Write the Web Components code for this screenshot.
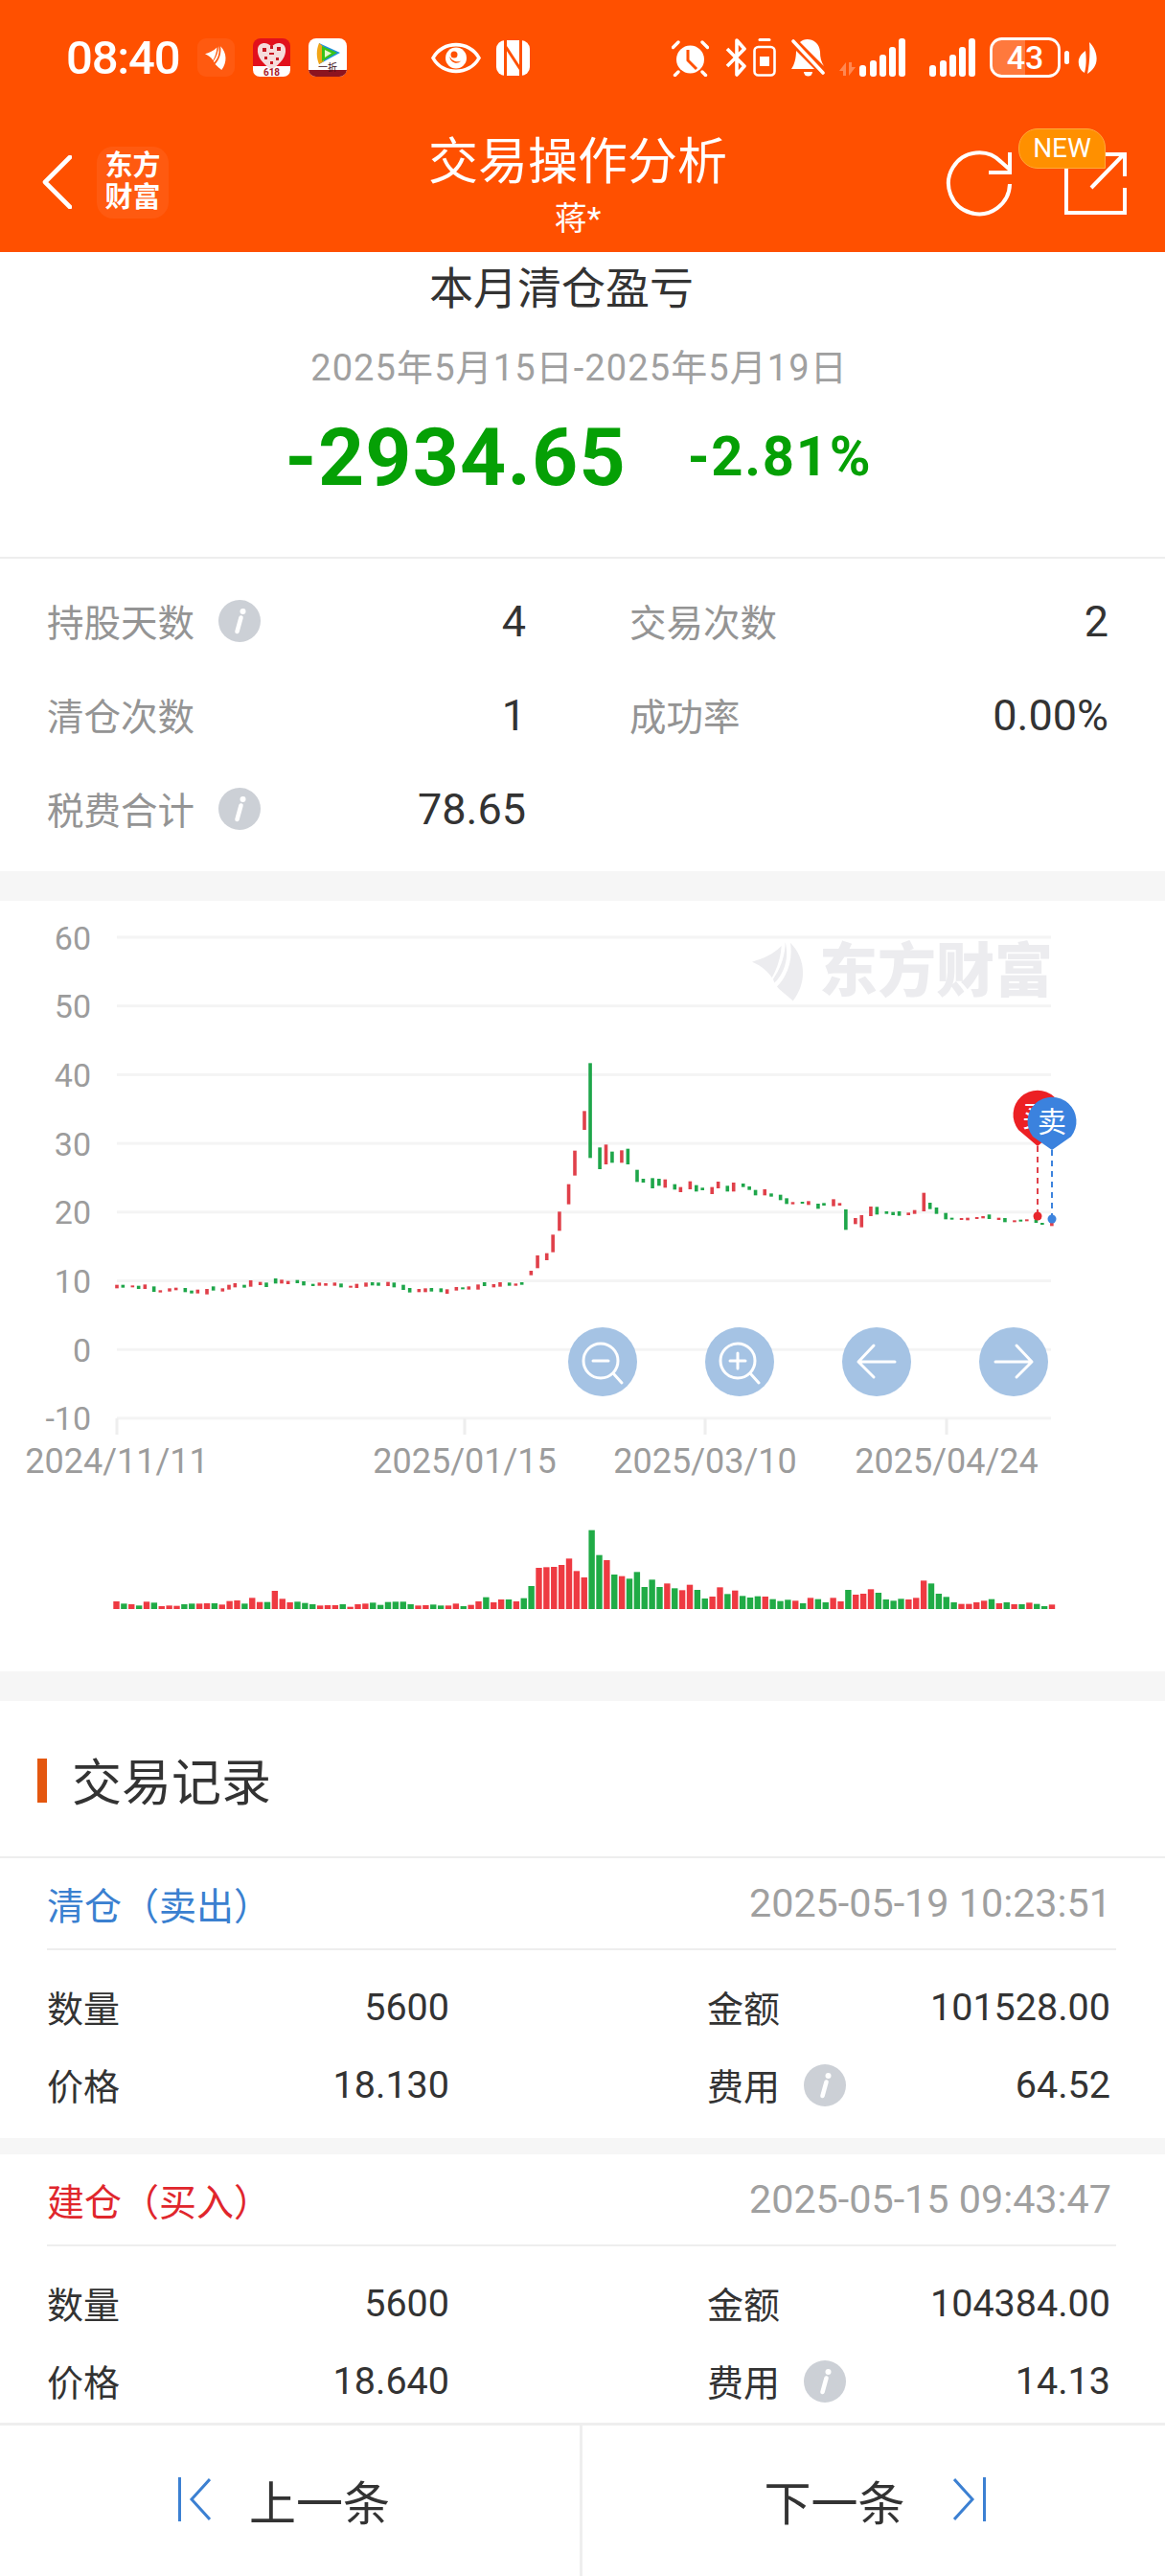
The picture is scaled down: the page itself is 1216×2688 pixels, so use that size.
<!DOCTYPE html>
<html lang="zh">
<head>
<meta charset="utf-8">
<title>交易操作分析</title>
<style>
    html, body{
        margin: 0;
        padding: 0;
        background: #fff;
        font-family: Roboto, "Noto Sans CJK SC", sans-serif;
        color: #333;
    }
</style>
</head>
<body>
<trade-app></trade-app>

<script>
const FEATHER = `
    <path d="M0 62C32 52 66 40 92 12C90 52 76 88 62 112C48 88 24 72 0 62Z"/>
    <path d="M104 0C116 44 104 96 70 128L66 116C88 84 104 44 104 0Z"/>
    <path d="M120 2C170 52 172 128 128 185C116 172 96 160 78 140C112 104 128 56 120 2Z"/>`;

const INFO_ICON = `
    <svg width="44" height="44" viewBox="0 0 44 44" style="flex:none">
        <circle cx="22" cy="22" r="22" fill="#ccd0d6"/>
        <circle cx="25.5" cy="12" r="3" fill="#fff"/>
        <path d="M23.5 18.5L19.5 33" stroke="#fff" stroke-width="4.6" stroke-linecap="round"/>
    </svg>`;

// ---------- status bar ----------
const statusTemplate = document.createElement('template');
statusTemplate.innerHTML = `
    <style>
        :host{
            display: flex;
            align-items: center;
            height: 120px;
            padding-left: 69px;
            box-sizing: border-box;
            color: #fff;
        }
        .time{
            width: 125px;
            font-size: 49px;
            font-weight: 500;
            letter-spacing: -1.2px;
        }
        svg{
            flex: none;
            display: block;
        }
    </style>
    <span class="time">08:40</span>
    <svg width="39" height="40" viewBox="0 0 39 40" style="margin-left:12px">
        <rect width="39" height="40" rx="9" fill="#ff5a10"/>
        <g fill="#fff" transform="translate(8 8) scale(.135)">${FEATHER}</g>
    </svg>
    <svg width="39" height="40" viewBox="0 0 39 40" style="margin-left:19px">
        <rect width="39" height="40" rx="8" fill="#e2101c"/>
        <path d="M0 29H39V33a7 7 0 0 1-7 7H7a7 7 0 0 1-7-7Z" fill="#fff"/>
        <path d="M19.5 33C10 26 4 19 5 11C6 4 15 3 19.5 9C24 3 33 4 34 11C35 19 29 26 19.5 33Z" fill="#f6dcdc"/>
        <path d="M10 10h4v4h-4zM17 15h5v2h-5zM25 9h4v4h-4zM12 19h3v3h-3zM24 20h3v3h-3zM18 24h3v3h-3zM18 8h3v3h-3z" fill="#c81822"/>
        <text x="19.5" y="39" text-anchor="middle" font-size="10" font-weight="700" fill="#a8182a">618</text>
    </svg>
    <svg width="40" height="40" viewBox="0 0 40 40" style="margin-left:19px">
        <rect width="40" height="40" rx="8" fill="#fff"/>
        <path d="M0 33H40a8 8 0 0 1-8 7H8a8 8 0 0 1-8-7Z" fill="#8c1420"/>
        <path d="M11 5L33 15L11 27Z" fill="#1d8fe0"/>
        <path d="M11 5C8 12 8 20 11 27L16 24V9Z" fill="#f2a516"/>
        <path d="M14 8L30 15L14 24Z" fill="#38c21a"/>
        <path d="M17 12L24 15.5L17 20Z" fill="#e8f8c8"/>
        <text x="20" y="34" text-anchor="middle" font-size="10" fill="#401018">一折</text>
    </svg>
    <svg width="52" height="35" viewBox="0 0 52 35" style="margin-left:88px">
        <path d="M2 17.5C12 -1 40 -1 50 17.5C40 36 12 36 2 17.5Z" fill="none" stroke="#fff" stroke-width="3.6"/>
        <circle cx="26" cy="17.5" r="11" fill="#fff"/>
        <path d="M20 14A7 7 0 0 0 30 22A9 9 0 0 1 20 14Z" fill="#ff5000" transform="rotate(-18 26 17)"/>
        <circle cx="24" cy="14" r="3.5" fill="#ff5000"/>
    </svg>
    <svg width="35" height="37" viewBox="0 0 35 37" style="margin-left:16px">
        <rect width="35" height="37" rx="9" fill="#fff"/>
        <path d="M9.5 -1V38M25.5 -1V38M10 7L25 30" fill="none" stroke="#ff5000" stroke-width="3"/>
    </svg>
    <svg width="39" height="39" viewBox="0 0 39 39" style="margin-left:148px">
        <circle cx="19.5" cy="21" r="14.5" fill="#fff"/>
        <path d="M17 11V22L26 31" fill="none" stroke="#ff5000" stroke-width="3"/>
        <path d="M1.5 8.5L7 3M37.5 8.5L32 3M7 34L3.5 37.5M32 34L35.5 37.5" stroke="#fff" stroke-width="3.4" stroke-linecap="round"/>
    </svg>
    <svg width="23" height="40" viewBox="0 0 23 40" style="margin-left:17px">
        <path d="M2 11L20 29L12 38V2L20 11L2 29" fill="none" stroke="#fff" stroke-width="3.6" stroke-linejoin="round"/>
    </svg>
    <svg width="24" height="40" viewBox="0 0 24 40" style="margin-left:6px">
        <path d="M7 1.5H17" stroke="#fff" stroke-width="3" stroke-linecap="round"/>
        <rect x="1.5" y="9" width="21" height="29.5" rx="4" fill="none" stroke="#fff" stroke-width="2.6"/>
        <rect x="7" y="19" width="10" height="10" fill="#fff"/>
    </svg>
    <svg width="35" height="40" viewBox="0 0 35 40" style="margin-left:16px">
        <path d="M9 4C15 -2 29 1 30 14C30 20 31 24 34 29ZM5 13L24 32H0C3 28 5 21 5 13Z" fill="#fff"/>
        <path d="M2 3L33 36" stroke="#fff" stroke-width="3.6" stroke-linecap="round"/>
        <path d="M13 35H22A4.5 4.5 0 0 1 13 35Z" fill="#fff"/>
    </svg>
    <svg width="17" height="14" viewBox="0 0 17 14" style="margin:24px 0 0 15px">
        <path d="M7 14V0L0 9H4V14ZM10 0V14L17 5H13V0Z" fill="#fff" opacity=".32"/>
    </svg>
    <svg width="48" height="40" viewBox="0 0 48 40" style="margin-left:4px">
        <rect x="0" y="28" width="7" height="12" rx="3" fill="#fff"/>
        <rect x="11" y="23" width="7" height="17" rx="3" fill="#fff"/>
        <rect x="21" y="17" width="7" height="23" rx="3" fill="#fff"/>
        <rect x="31" y="9" width="7" height="31" rx="3" fill="#fff"/>
        <rect x="41" y="0" width="7" height="40" rx="3" fill="#fff"/>
    </svg>
    <svg width="48" height="40" viewBox="0 0 48 40" style="margin-left:25px">
        <rect x="0" y="28" width="7" height="12" rx="3" fill="#fff"/>
        <rect x="11" y="23" width="7" height="17" rx="3" fill="#fff"/>
        <rect x="21" y="17" width="7" height="23" rx="3" fill="#fff"/>
        <rect x="31" y="9" width="7" height="31" rx="3" fill="#fff"/>
        <rect x="41" y="0" width="7" height="40" rx="3" fill="#fff"/>
    </svg>
    <svg width="84" height="42" viewBox="0 0 84 42" style="margin-left:15px">
        <path d="M10 3H37V39H10A8 8 0 0 1 3 31V10A8 8 0 0 1 10 3Z" fill="#fff" opacity=".24"/>
        <rect x="1.5" y="1.5" width="71" height="39" rx="11" fill="none" stroke="#fff" stroke-width="2.8"/>
        <rect x="78" y="14" width="5" height="14" rx="2.5" fill="#fff"/>
        <text x="37" y="33" text-anchor="middle" font-size="34" font-weight="500" fill="#fff">43</text>
    </svg>
    <svg width="20" height="33" viewBox="0 0 20 33" style="margin-left:8px">
        <path d="M12 0C18 6 21 14 19 22C17 28 13 31 10 33C12 24 13 12 12 0ZM8 9C9 16 9 25 7 32C2 29 0 24 1 18C2 14 5 11 8 9Z" fill="#fff"/>
    </svg>
`;

class StatusBar extends HTMLElement {
    constructor () {
        super();
        this.attachShadow({ mode: 'open' }).appendChild(statusTemplate.content.cloneNode(true));
    }
}
customElements.define('status-bar', StatusBar);

// ---------- nav bar ----------
const navTemplate = document.createElement('template');
navTemplate.innerHTML = `
    <style>
        :host{
            display: grid;
            grid-template-columns: 1fr auto 1fr;
            height: 143px;
            color: #fff;
        }
        .left{
            display: flex;
            align-items: center;
            padding: 0 0 3px 44px;
        }
        .logo{
            margin-left: 26px;
            width: 75px;
            height: 75px;
            background: #ff5a10;
            border-radius: 17px;
            display: flex;
            align-items: center;
            justify-content: center;
            text-align: center;
            font-size: 29px;
            font-weight: 700;
            line-height: 33px;
        }
        .center{
            text-align: center;
            margin-right: 10px;
            padding-top: 19px;
        }
        .title{
            font-size: 52px;
            line-height: 62px;
        }
        .sub{
            margin-top: 7px;
            font-size: 34px;
            line-height: 40px;
        }
        .right{
            display: flex;
            justify-content: flex-end;
            align-items: center;
            padding: 0 40px 1px 0;
            gap: 53px;
        }
        .share{
            position: relative;
            height: 66px;
        }
        .new{
            position: absolute;
            left: -47px;
            top: -24px;
            width: 91px;
            height: 42px;
            box-sizing: border-box;
            background: #ff9000;
            border: 1px solid #ffa93a;
            border-radius: 20px 20px 0 20px;
            font-size: 28px;
            line-height: 40px;
            text-align: center;
        }
        svg{
            display: block;
        }
    </style>
    <div class="left">
        <svg width="31" height="56" viewBox="0 0 31 56">
            <path d="M29 2L3 28L29 54" fill="none" stroke="#fff" stroke-width="4.6" stroke-linecap="round" stroke-linejoin="round"/>
        </svg>
        <div class="logo">东方<br>财富</div>
    </div>
    <div class="center">
        <div class="title">交易操作分析</div>
        <div class="sub">蒋*</div>
    </div>
    <div class="right">
        <svg width="70" height="70" viewBox="0 0 70 70">
            <path d="M67 36A32 32 0 1 1 58 13L67 21" fill="none" stroke="#fff" stroke-width="4"/>
            <path d="M67 3V24H45" fill="none" stroke="#fff" stroke-width="4"/>
        </svg>
        <div class="share">
            <svg width="66" height="66" viewBox="0 0 66 66">
                <path d="M3 18V64H64V38" fill="none" stroke="#fff" stroke-width="4"/>
                <path d="M29 38L63 3M39 3H64V26" fill="none" stroke="#fff" stroke-width="4"/>
            </svg>
            <div class="new">NEW</div>
        </div>
    </div>
`;

class NavBar extends HTMLElement {
    constructor () {
        super();
        this.attachShadow({ mode: 'open' }).appendChild(navTemplate.content.cloneNode(true));
    }
}
customElements.define('nav-bar', NavBar);

// ---------- summary ----------
const summaryTemplate = document.createElement('template');
summaryTemplate.innerHTML = `
    <style>
        :host{
            display: block;
            height: 320px;
            box-sizing: border-box;
            padding-top: 8px;
            text-align: center;
            border-bottom: 2px solid #eeeeee;
        }
        .title{
            font-size: 46px;
            line-height: 60px;
            color: #333;
            margin-right: 44px;
        }
        .date{
            margin-top: 28px;
            font-size: 38px;
            line-height: 50px;
            color: #a0a0a0;
            letter-spacing: 1.1px;
            margin-right: 7px;
        }
        .profit{
            margin-top: 23px;
            height: 90px;
            display: flex;
            align-items: center;
            justify-content: center;
            gap: 64px;
            color: #05a005;
            font-weight: 700;
            padding-right: 8px;
        }
        .big{
            font-size: 84px;
            letter-spacing: 1.2px;
        }
        .pct{
            font-size: 58px;
            letter-spacing: 1.7px;
            margin-top: -2px;
        }
    </style>
    <div class="title">本月清仓盈亏</div>
    <div class="date">2025年5月15日-2025年5月19日</div>
    <div class="profit">
        <span class="big">-2934.65</span>
        <span class="pct">-2.81%</span>
    </div>
`;

class SummaryCard extends HTMLElement {
    constructor () {
        super();
        this.attachShadow({ mode: 'open' }).appendChild(summaryTemplate.content.cloneNode(true));
    }
}
customElements.define('summary-card', SummaryCard);

// ---------- key/value cell, used by the stats and by the records ----------
const kvTemplate = document.createElement('template');
kvTemplate.innerHTML = `
    <style>
        :host{
            display: flex;
            align-items: center;
        }
        .label{
            font-size: var(--kv-label-size, 38px);
            color: var(--kv-label-color, #333);
            margin: -3px 25px 0 0;
        }
        .value{
            margin-left: auto;
            font-size: var(--kv-value-size, 40px);
            color: #333;
        }
        .info{
            display: flex;
        }
    </style>
    <span class="label"></span>
    <span class="info"></span>
    <span class="value"></span>
`;

class KvItem extends HTMLElement {
    constructor () {
        super();
        this.attachShadow({ mode: 'open' }).appendChild(kvTemplate.content.cloneNode(true));
    }

    connectedCallback () {
        const root = this.shadowRoot;
        root.querySelector('.label').textContent = this.getAttribute('label');
        root.querySelector('.value').textContent = this.getAttribute('value');
        if(this.hasAttribute('info')) root.querySelector('.info').innerHTML = INFO_ICON;
    }
}
customElements.define('kv-item', KvItem);

// ---------- stats ----------
const statsTemplate = document.createElement('template');
statsTemplate.innerHTML = `
    <style>
        :host{
            display: grid;
            grid-template-columns: 500px 500px;
            grid-auto-rows: 98px;
            column-gap: 108px;
            align-items: center;
            height: 326px;
            box-sizing: border-box;
            padding: 16px 0 0 49px;
            --kv-label-size: 38.5px;
            --kv-label-color: #949494;
            --kv-value-size: 45px;
        }
    </style>
    <kv-item label="持股天数" info value="4"></kv-item>
    <kv-item label="交易次数" value="2"></kv-item>
    <kv-item label="清仓次数" value="1"></kv-item>
    <kv-item label="成功率" value="0.00%"></kv-item>
    <kv-item label="税费合计" info value="78.65"></kv-item>
`;

class StatsPanel extends HTMLElement {
    constructor () {
        super();
        this.attachShadow({ mode: 'open' }).appendChild(statsTemplate.content.cloneNode(true));
    }
}
customElements.define('stats-panel', StatsPanel);

// ---------- chart ----------
const chartTemplate = document.createElement('template');
chartTemplate.innerHTML = `
    <style>
        :host{
            display: block;
            height: 804px;
            background: #fff;
        }
        svg{
            display: block;
        }
        text{
            font-family: Roboto, "Noto Sans CJK SC", sans-serif;
        }
    </style>
    <svg width="1216" height="804" viewBox="0 940 1216 804"></svg>
`;

// x in zoomed px, top, bottom, r/g
const LEFT_A = `36 62 73 r,55 62 71 g,85 64 70 r,104 65 75 g,124 61 75 r,152 67 84 g,172 79 86 r,201 73 83 r,221 71 79 r,250 72 85 g,270 80 89 g,289 77 89 r,318 75 92 r,338 67 80 g,367 73 83 r,387 62 77 r,406 57 70 r,435 62 71 g,455 48 68 r,485 53 63 r,504 55 69 g,533 42 58 g,552 46 58 r,572 50 60 r,601 47 57 g,621 51 64 g,650 59 66 g`;
const LEFT_B = `10 55 65 r,30 57 65 r,58 55 65 r,78 58 70 g,108 65 70 r,127 59 72 r,156 55 68 r,176 54 64 g,195 55 65 g,225 53 66 r,244 55 70 g,273 62 78 g,293 72 86 g,322 75 85 r,342 73 85 r,361 72 83 g,391 73 85 g,410 76 90 r,439 69 80 r,459 70 75 g,478 67 77 r,507 61 77 r,527 54 66 g,556 60 70 r,576 54 68 r,605 55 65 g,625 58 65 r,644 54 62 g,673 18 32 r`;
const RIGHT = `3 810 850 r,30 803 825 r,48 745 800 r,67 673 733 r,94 587 650 r,112 482 560 r,140 358 417 r,157 208 505 g,185 472 540 g,203 463 525 r,221 485 520 g,249 481 520 r,267 476 525 g,294 542 580 g,312 570 582 g,339 568 600 g,358 570 592 g,376 572 598 r,404 587 604 g,421 596 612 r,449 578 603 r,467 590 610 g,485 598 606 g,513 596 618 r,531 579 600 r,558 592 610 g,576 582 610 r,604 585 596 g,622 594 605 g,640 605 622 g,667 603 622 r,686 616 626 g,713 620 637 g,731 631 649 g,749 643 650 r,777 642 648 g,795 640 652 r,823 648 664 g,840 646 654 g,868 634 656 r,886 646 654 r,904 666 730 g,932 693 712 r,950 684 722 r,977 657 687 r,995 658 682 g,1023 672 680 g,1042 674 684 g,1060 672 686 g,1087 676 684 r,1105 668 680 r,1132 614 672 r,1150 645 665 g,1169 660 680 g,1196 677 697 g,1214 692 696 g,1242 693 699 r,1260 692 700 r,1287 690 694 r,1305 687 694 r,1323 682 696 g,1351 692 699 r,1369 693 706 g,1397 700 703 r,1415 698 703 g,1433 697 703 r,1460 697 708 g,1478 708 711 g,1506 706 718 r`;
// top of each volume bar in zoomed px, minus means green
const VOLUME = [333,-340,342,-346,334,-337,348,346,347,-342,-340,340,339,-339,343,332,330,-340,322,335,-335,300,325,336,-334,-338,-342,346,345,345,-342,350,342,340,-337,-344,-335,-334,-334,-342,346,345,-343,-346,346,340,-348,344,333,-320,336,327,-327,333,-323,-285,228,226,225,219,199,238,258,-110,-188,204,-249,254,-262,-241,-288,-265,-288,277,-292,298,281,-297,-324,318,289,-310,299,-316,-321,-317,318,-326,-332,-328,331,-339,322,-326,-336,322,333,-297,312,309,295,-306,-327,-331,-325,327,322,268,-277,-309,-319,-336,341,341,336,331,-326,339,-336,342,-342,337,-341,-348,343];

class KlineChart extends HTMLElement {
    constructor () {
        super();
        this.attachShadow({ mode: 'open' }).appendChild(chartTemplate.content.cloneNode(true));
        this.shadowRoot.querySelector('svg').innerHTML = this._render();
    }

    _candles (data, toX, toY) {
        return data.split(',').map(item => {
            const [x, top, bottom, type] = item.split(' ');
            const y = toY(+top);
            const h = Math.max(toY(+bottom) - y, 2);
            const color = type == 'r' ? '#e0404a' : '#1ea64a';
            return `<rect x="${toX(+x) - 1.8}" y="${y}" width="3.6" height="${h}" fill="${color}"/>`;
        }).join('');
    }

    _render () {
        let out = '';

        // grid and y axis
        for(let i = 0; i < 8; i++){
            const y = 978 + i * 71.7;
            out += `<rect x="122" y="${y - 1.5}" width="975" height="3" fill="#f4f4f4"/>`;
            out += `<text x="95" y="${y + 12.5}" text-anchor="end" font-size="34" fill="#9c9c9c">${60 - i * 10}</text>`;
        }

        // watermark
        out += `<g fill="#ececef" transform="translate(785 983) scale(.333)">${FEATHER}</g>`;
        out += `<text x="855" y="1035" font-size="61" font-weight="900" fill="#ececef">东方财富</text>`;

        // x axis
        [[122, '2024/11/11'], [485, '2025/01/15'], [736, '2025/03/10'], [988, '2025/04/24']].forEach(([x, label]) => {
            out += `<rect x="${x - 1.5}" y="1480" width="3" height="17" fill="#eeeeee"/>`;
            out += `<text x="${x}" y="1537" text-anchor="middle" font-size="36" fill="#9c9c9c">${label}</text>`;
        });

        // candles
        out += this._candles(LEFT_A, x => 110 + x / 3, y => 1320 + y / 3);
        out += this._candles(LEFT_B, x => 330 + x / 3, y => 1320 + y / 3);
        out += this._candles(RIGHT, x => 560 + x / 2.8, y => 1040 + y / 3);

        // buy and sell pins
        out += `<path d="M1083 1196V1268" stroke="#e0404a" stroke-width="2" stroke-dasharray="6 5"/>`;
        out += `<circle cx="1083" cy="1269" r="4.5" fill="#e8262c"/>`;
        out += `<path d="M1098 1200V1272" stroke="#3d83dd" stroke-width="2" stroke-dasharray="6 5"/>`;
        out += `<circle cx="1098" cy="1272" r="4.5" fill="#3d83dd"/>`;
        out += `<path d="M1083 1196L1063 1179A25.5 25.5 0 1 1 1103 1179Z" fill="#ec2024"/>`;
        out += `<text x="1082" y="1175" text-anchor="middle" font-size="30" fill="#fff">买</text>`;
        out += `<path d="M1098 1200L1078 1186A25.5 25.5 0 1 1 1118 1186Z" fill="#3b82de"/>`;
        out += `<text x="1098" y="1181" text-anchor="middle" font-size="30" fill="#fff">卖</text>`;

        // round buttons
        const icons = [
            '<circle cx="-2" cy="-1" r="18" /><path d="M11 12L20 22M-10 -1H6"/>',
            '<circle cx="-2" cy="-1" r="18" /><path d="M11 12L20 22M-10 -1H6M-2 -9V7"/>',
            '<path d="M19 0H-19M-3 -17L-19 0L-3 16"/>',
            '<path d="M-19 0H19M3 -17L19 0L3 16"/>'
        ];
        [629, 772, 915, 1058].forEach((x, i) => {
            out += `<circle cx="${x}" cy="1421" r="36" fill="#a5c3e4"/>`;
            out += `<g transform="translate(${x} 1421)" fill="none" stroke="#fff" stroke-width="3" stroke-linecap="round" stroke-linejoin="round">${icons[i]}</g>`;
        });

        // volume
        const pitch = (1098 - 121.5) / (VOLUME.length - 1);
        VOLUME.forEach((v, i) => {
            const y = 1560 + Math.abs(v) / 3;
            const color = v > 0 ? '#ee3a42' : '#20ab46';
            out += `<rect x="${121.5 + i * pitch - 3.2}" y="${y}" width="6.4" height="${1679 - y}" fill="${color}"/>`;
        });

        return out;
    }
}
customElements.define('kline-chart', KlineChart);

// ---------- records ----------
const headTemplate = document.createElement('template');
headTemplate.innerHTML = `
    <style>
        :host{
            display: flex;
            align-items: center;
            height: 164px;
            box-sizing: border-box;
            padding: 0 0 0 39px;
            border-bottom: 2px solid #eeeeee;
            gap: 26px;
            font-size: 52px;
            color: #333;
        }
        i{
            width: 10px;
            height: 46px;
            margin-top: 4px;
            background: #e4570f;
        }
    </style>
    <i></i><slot></slot>
`;

class SectionHead extends HTMLElement {
    constructor () {
        super();
        this.attachShadow({ mode: 'open' }).appendChild(headTemplate.content.cloneNode(true));
    }
}
customElements.define('section-head', SectionHead);

const recordTemplate = document.createElement('template');
recordTemplate.innerHTML = `
    <style>
        :host{
            display: block;
            background: #fff;
            height: 292px;
            box-sizing: border-box;
            padding: 0 49px 14px 49px;
        }
        .top{
            height: 96px;
            box-sizing: border-box;
            display: flex;
            align-items: center;
            justify-content: space-between;
            border-bottom: 2px solid #eeeeee;
            padding: 0 7px 0 0;
            margin-right: 2px;
        }
        .type{
            font-size: 39px;
            color: var(--record-color);
        }
        .time{
            font-size: 41.3px;
            color: #a0a0a0;
            margin-right: -2px;
        }
        .rows{
            display: grid;
            grid-template-columns: 420px 421px;
            grid-auto-rows: 81px;
            column-gap: 269px;
            align-items: center;
            padding-top: 19px;
            --kv-label-size: 38px;
            --kv-value-size: 39.5px;
        }
    </style>
    <div class="top">
        <span class="type"></span>
        <span class="time"></span>
    </div>
    <div class="rows">
        <kv-item label="数量" class="qty"></kv-item>
        <kv-item label="金额" class="amount"></kv-item>
        <kv-item label="价格" class="price"></kv-item>
        <kv-item label="费用" info class="fee"></kv-item>
    </div>
`;

class TradeRecord extends HTMLElement {
    constructor () {
        super();
        this.attachShadow({ mode: 'open' }).appendChild(recordTemplate.content.cloneNode(true));
    }

    connectedCallback () {
        const root = this.shadowRoot;
        this.style.setProperty('--record-color', this.getAttribute('color'));
        root.querySelector('.type').textContent = this.getAttribute('type');
        root.querySelector('.time').textContent = this.getAttribute('time');
        ['qty', 'amount', 'price', 'fee'].forEach(name => {
            const $item = root.querySelector('.' + name);
            $item.shadowRoot.querySelector('.value').textContent = this.getAttribute(name);
        });
    }
}
customElements.define('trade-record', TradeRecord);

// ---------- bottom bar ----------
const pagerTemplate = document.createElement('template');
pagerTemplate.innerHTML = `
    <style>
        :host{
            display: grid;
            grid-template-columns: 608px 1fr;
            height: 160px;
            box-sizing: border-box;
            border-top: 3px solid #eeeeee;
            background: #fff;
            font-size: 49px;
            color: #333;
        }
        div{
            display: flex;
            align-items: center;
            justify-content: center;
            box-sizing: border-box;
            padding-bottom: 3px;
        }
        .prev{
            border-right: 3px solid #eeeeee;
            gap: 40px;
            padding-right: 12px;
        }
        .next{
            gap: 50px;
            padding-left: 2px;
        }
        svg{
            display: block;
        }
    </style>
    <div class="prev">
        <svg width="34" height="46" viewBox="0 0 34 46">
            <path d="M1.5 0V46M33 2L14 23L33 44" fill="none" stroke="#3c80d2" stroke-width="3"/>
        </svg>
        <span>上一条</span>
    </div>
    <div class="next">
        <span>下一条</span>
        <svg width="34" height="46" viewBox="0 0 34 46">
            <path d="M32.5 0V46M1 2L20 23L1 44" fill="none" stroke="#3c80d2" stroke-width="3"/>
        </svg>
    </div>
`;

class PagerBar extends HTMLElement {
    constructor () {
        super();
        this.attachShadow({ mode: 'open' }).appendChild(pagerTemplate.content.cloneNode(true));
    }
}
customElements.define('pager-bar', PagerBar);

// ---------- page ----------
const appTemplate = document.createElement('template');
appTemplate.innerHTML = `
    <style>
        :host{
            display: flex;
            flex-direction: column;
            width: 1216px;
            height: 2688px;
            overflow: hidden;
            background: #fff;
        }
        .header{
            background: #ff5000;
            height: 263px;
            flex: none;
        }
        .content{
            flex: auto;
            min-height: 0;
            overflow: hidden;
        }
        .gap{
            height: 31px;
            background: #f6f6f6;
        }
        .gap.thin{
            height: 17px;
        }
        pager-bar{
            flex: none;
        }
    </style>
    <div class="header">
        <status-bar></status-bar>
        <nav-bar></nav-bar>
    </div>
    <div class="content">
        <summary-card></summary-card>
        <stats-panel></stats-panel>
        <div class="gap"></div>
        <kline-chart></kline-chart>
        <div class="gap"></div>
        <section-head>交易记录</section-head>
        <trade-record color="#3a80d0" type="清仓（卖出）" time="2025-05-19 10:23:51"
            qty="5600" amount="101528.00" price="18.130" fee="64.52"></trade-record>
        <div class="gap thin"></div>
        <trade-record color="#e0262c" type="建仓（买入）" time="2025-05-15 09:43:47"
            qty="5600" amount="104384.00" price="18.640" fee="14.13"></trade-record>
    </div>
    <pager-bar></pager-bar>
`;

class TradeApp extends HTMLElement {
    constructor () {
        super();
        this.attachShadow({ mode: 'open' }).appendChild(appTemplate.content.cloneNode(true));
    }
}
customElements.define('trade-app', TradeApp);
</script>
</body>
</html>
